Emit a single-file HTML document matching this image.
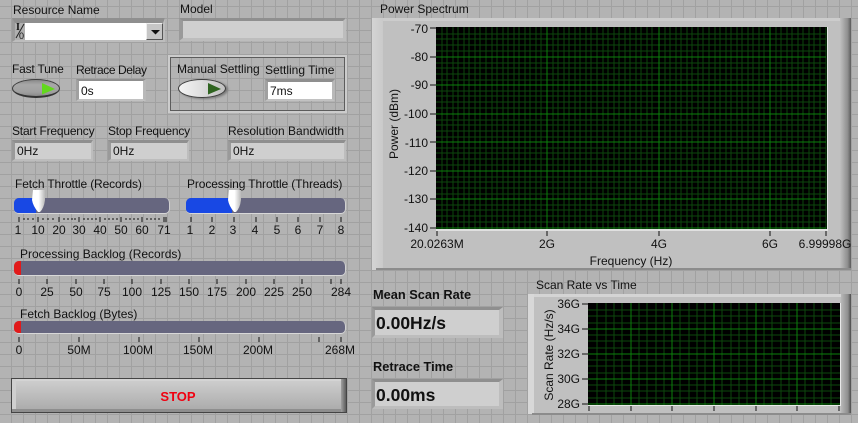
<!DOCTYPE html>
<html><head><meta charset="utf-8"><style>
html,body{margin:0;padding:0}
#p{position:relative;width:858px;height:423px;overflow:hidden;background-color:#b3b3b3;
background-image:linear-gradient(#a1a1a1 1px,transparent 1px),linear-gradient(90deg,#a1a1a1 1px,transparent 1px);
background-size:12px 12px;background-position:11px 6px;
font-family:"Liberation Sans",sans-serif;font-size:12px;color:#111}
.t{position:absolute;white-space:nowrap;line-height:14px}
.c{transform:translateX(-50%)}
.r{text-align:right}
.n{letter-spacing:-.2px}
.h{font-weight:bold;font-size:12.8px}
.v{font-weight:bold;font-size:17.5px}
.b{position:absolute;box-sizing:border-box;border-style:solid;border-width:3px;border-color:#8f8f8f #bdbdbd #bdbdbd #9a9a9a;background:#cfcfcf}
.w{background:#fff}
.track{position:absolute;background:#66667f;border-radius:5px;border-bottom:1px solid #d8d8d8;border-right:1px solid #d0d0d0;box-sizing:border-box;overflow:hidden}
.fill{position:absolute;left:0;top:0;bottom:0}
svg{position:absolute;left:0;top:0}
</style></head><body><div id="p">

<div class="t" style="left:13px;top:3px">Resource Name</div>
<div class="b" style="left:12px;top:18px;width:153px;height:24px;background:#b0b0b0;border-width:5px 2px 2px 3px"></div>
<div style="position:absolute;left:25px;top:23px;width:121px;height:17px;background:#fff"></div>
<div class="t" style="left:16px;top:23px;font-family:'Liberation Serif',serif;font-size:10px;line-height:9px;font-weight:bold">I</div>
<div class="t" style="left:19px;top:32px;font-size:9px;line-height:8px">0</div>
<svg width="858" height="423"><path d="M24 24L16 38" stroke="#222" fill="none"/></svg>
<div style="position:absolute;left:146px;top:23px;width:17px;height:17px;box-sizing:border-box;background:#c6c6c6;border:1px solid #555;border-top-color:#eee;border-left-color:#eee"></div>
<svg width="858" height="423"><path d="M151 30h9l-4.500 4.500z" fill="#111"/></svg>

<div class="t" style="left:180px;top:2px">Model</div>
<div class="b" style="left:179px;top:18px;width:167px;height:23px;border-width:3px 3px 3px 4px"></div>

<div class="t n" style="left:12px;top:62px">Fast Tune</div>
<div style="position:absolute;left:12px;top:79px;width:48px;height:19px;box-sizing:border-box;border-radius:50%;background:linear-gradient(#8a8a8a,#a8a8a8 30%,#a0a0a0 75%,#8a8a8a);border:1px solid #3c3c3c;border-bottom:2px solid #333"></div>
<svg width="858" height="423"><path d="M42 83L55 89L42 94.500z" fill="#62d81c"/></svg>
<div class="t" style="left:76px;top:63px;letter-spacing:-.42px">Retrace Delay</div>
<div class="b w" style="left:76px;top:79px;width:70px;height:22px;border-width:2px 3px 2px 3px;border-color:#8f8f8f #b8b8b8 #c2c2c2 #a0a0a0"></div>
<div class="t" style="left:81px;top:84px">0s</div>

<div style="position:absolute;left:168px;top:55px;width:179px;height:58px;box-sizing:border-box;border:2px solid #cccccc"><div style="position:absolute;inset:0;border:1px solid #5c5c5c"></div></div>
<div class="t" style="left:177px;top:62px">Manual Settling</div>
<div class="t" style="left:265px;top:63px">Settling Time</div>
<div style="position:absolute;left:178px;top:79px;width:48px;height:19px;box-sizing:border-box;border-radius:50%;background:linear-gradient(90deg,#f4f4f4,#e0e0e0 45%,#c0c0c0);border:1px solid #3c3c3c;box-shadow:2px 1px 2px #777"></div>
<svg width="858" height="423"><path d="M208 83L221 89L208 94.500z" fill="#2f6420"/></svg>
<div class="b w" style="left:265px;top:79px;width:70px;height:22px;border-width:3px 3px 2px 3px;border-color:#8f8f8f #b8b8b8 #c2c2c2 #a0a0a0"></div>
<div class="t" style="left:270px;top:84px">7ms</div>

<div class="t n" style="left:12px;top:124px">Start Frequency</div>
<div class="t n" style="left:108px;top:124px">Stop Frequency</div>
<div class="t" style="left:228px;top:124px">Resolution Bandwidth</div>
<div class="b" style="left:12px;top:140px;width:81px;height:21px;border-width:3px 2px 2px 3px"></div>
<div class="t" style="left:17px;top:144px">0Hz</div>
<div class="b" style="left:108px;top:140px;width:81px;height:21px;border-width:3px 2px 2px 3px"></div>
<div class="t" style="left:113px;top:144px">0Hz</div>
<div class="b" style="left:228px;top:140px;width:118px;height:21px;border-width:3px 2px 2px 3px"></div>
<div class="t" style="left:233px;top:144px">0Hz</div>

<div class="t" style="left:15px;top:177px;letter-spacing:-.13px">Fetch Throttle (Records)</div>
<div class="t" style="left:187px;top:177px;letter-spacing:-.11px">Processing Throttle (Threads)</div>
<div class="track" style="left:14px;top:198px;width:156px;height:16px"><div class="fill" style="width:22px;background:#1848e4"></div></div>
<div class="track" style="left:186px;top:198px;width:160px;height:16px"><div class="fill" style="width:46px;background:#1848e4"></div></div>
<svg width="858" height="423"><defs><linearGradient id="k"><stop offset="0" stop-color="#fff"/><stop offset=".5" stop-color="#fff"/><stop offset="1" stop-color="#b8b8b8"/></linearGradient></defs>
<path d="M33 190H45V200Q44 208 40 212H38Q33 206 32 200z" fill="url(#k)"/>
<path d="M229 190H241V200Q240 208 236 212H234Q229 206 228 200z" fill="url(#k)"/>
<path shape-rendering="crispEdges" stroke="#111" fill="none" d="M19 217v5M38 217v5M59 217v5M79 217v5M100 217v5M121 217v5M142 217v5M164 217v5M166 217v5M24 218v2M28 218v2M33 218v2M43 218v2M48 218v2M53 218v2M64 218v2M68 218v2M72 218v2M75 218v2M84 218v2M88 218v2M92 218v2M96 218v2M105 218v2M109 218v2M113 218v2M117 218v2M126 218v2M130 218v2M134 218v2M138 218v2M147 218v2M151 218v2M155 218v2M159 218v2
M191 217v5M212 217v5M234 217v5M256 217v5M277 217v5M298 217v5M320 217v5M341 217v5
M19 279v5M47 279v5M76 279v5M104 279v5M132 279v5M161 279v5M189 279v5M217 279v5M246 279v5M274 279v5M302 279v5M331 279v5M341 279v5
M19 337v5M79 337v5M139 337v5M199 337v5M259 337v5M319 337v5M341 337v5"/></svg>
<div class="t c" style="left:18px;top:223px">1</div><div class="t c" style="left:38px;top:223px">10</div><div class="t c" style="left:59px;top:223px">20</div><div class="t c" style="left:79px;top:223px">30</div><div class="t c" style="left:100px;top:223px">40</div><div class="t c" style="left:121px;top:223px">50</div><div class="t c" style="left:142px;top:223px">60</div><div class="t c" style="left:164px;top:223px">71</div>
<div class="t c" style="left:190px;top:223px">1</div><div class="t c" style="left:212px;top:223px">2</div><div class="t c" style="left:233px;top:223px">3</div><div class="t c" style="left:255px;top:223px">4</div><div class="t c" style="left:277px;top:223px">5</div><div class="t c" style="left:298px;top:223px">6</div><div class="t c" style="left:320px;top:223px">7</div><div class="t c" style="left:341px;top:223px">8</div>

<div class="t" style="left:20px;top:247px">Processing Backlog (Records)</div>
<div class="track" style="left:14px;top:261px;width:332px;height:15px"><div class="fill" style="width:7px;background:#e21a1a"></div></div>
<div class="t c" style="left:19px;top:285px">0</div><div class="t c" style="left:47px;top:285px">25</div><div class="t c" style="left:76px;top:285px">50</div><div class="t c" style="left:104px;top:285px">75</div><div class="t c" style="left:132px;top:285px">100</div><div class="t c" style="left:161px;top:285px">125</div><div class="t c" style="left:189px;top:285px">150</div><div class="t c" style="left:217px;top:285px">175</div><div class="t c" style="left:246px;top:285px">200</div><div class="t c" style="left:274px;top:285px">225</div><div class="t c" style="left:302px;top:285px">250</div><div class="t c" style="left:341px;top:285px">284</div>

<div class="t" style="left:20px;top:307px">Fetch Backlog (Bytes)</div>
<div class="track" style="left:14px;top:321px;width:332px;height:13px"><div class="fill" style="width:7px;background:#e21a1a"></div></div>
<div class="t c" style="left:19px;top:343px">0</div><div class="t c" style="left:79px;top:343px">50M</div><div class="t c" style="left:138px;top:343px">100M</div><div class="t c" style="left:198px;top:343px">150M</div><div class="t c" style="left:258px;top:343px">200M</div><div class="t c" style="left:340px;top:343px">268M</div>

<div style="position:absolute;left:11px;top:378px;width:336px;height:35px;box-sizing:border-box;border:1px solid #444;background:#d4d4d4">
<div style="position:absolute;left:0;top:2px;right:0;bottom:0;background:linear-gradient(#cdcdcd,#a9a9a9)"></div>
<div style="position:absolute;left:0;top:0;bottom:0;width:4px;background:#cfcfcf"></div>
<div style="position:absolute;right:0;top:0;bottom:0;width:5px;background:linear-gradient(90deg,#a0a0a0,#5c5c5c)"></div>
<div style="position:absolute;left:0;right:5px;bottom:0;height:3px;background:#8e8e8e"></div>
</div>
<div class="t c" style="left:178px;top:390px;color:#f00010;font-weight:bold;font-size:13px">STOP</div>

<div class="t" style="left:380px;top:2px">Power Spectrum</div>
<div style="position:absolute;left:372px;top:18px;width:479px;height:252px;background:#c0c0c0"></div>
<div style="position:absolute;left:372px;top:18px;width:479px;height:3px;background:#cccccc"></div>
<div style="position:absolute;left:372px;top:18px;width:11px;height:252px;background:linear-gradient(90deg,#d4d4d4,#cacaca)"></div>
<div style="position:absolute;left:840px;top:18px;width:11px;height:252px;background:linear-gradient(90deg,#c0c0c0,#8e8e8e 70%,#5a5a5a)"></div>
<div style="position:absolute;left:376px;top:268px;width:475px;height:2px;background:#8c8c8c"></div>
<div style="position:absolute;left:436px;top:27px;width:392px;height:204px;box-sizing:border-box;background:#000;border-right:1px solid #e8e8e8;border-bottom:2px solid #e0e0e0"></div>
<svg width="858" height="423" shape-rendering="crispEdges" fill="none">
<path stroke="#0d470d" d="M442 27v202M447 27v202M453 27v202M458 27v202M464 27v202M469 27v202M475 27v202M480 27v202M486 27v202M492 27v202M497 27v202M503 27v202M508 27v202M514 27v202M519 27v202M525 27v202M530 27v202M536 27v202M541 27v202M553 27v202M558 27v202M564 27v202M569 27v202M575 27v202M580 27v202M586 27v202M591 27v202M597 27v202M603 27v202M608 27v202M614 27v202M619 27v202M625 27v202M630 27v202M636 27v202M641 27v202M647 27v202M652 27v202M665 27v202M670 27v202M676 27v202M681 27v202M687 27v202M692 27v202M698 27v202M703 27v202M709 27v202M715 27v202M720 27v202M726 27v202M731 27v202M737 27v202M742 27v202M748 27v202M753 27v202M759 27v202M764 27v202M776 27v202M781 27v202M787 27v202M792 27v202M798 27v202M803 27v202M809 27v202M814 27v202M820 27v202M826 27v202
M436 34h390M436 39h390M436 45h390M436 51h390M436 63h390M436 68h390M436 74h390M436 80h390M436 91h390M436 96h390M436 102h390M436 108h390M436 120h390M436 125h390M436 131h390M436 137h390M436 148h390M436 153h390M436 159h390M436 165h390M436 177h390M436 182h390M436 188h390M436 194h390M436 205h390M436 210h390M436 216h390M436 222h390"/>
<path stroke="#0c800c" d="M547 27v202M659 27v202M770 27v202M436 57h390M436 85h390M436 114h390M436 142h390M436 171h390M436 199h390M436 228h390"/>
<path stroke="#111" d="M430 28h6M430 57h6M430 85h6M430 114h6M430 142h6M430 171h6M430 199h6M430 228h6M437 231v5M547 231v5M659 231v5M770 231v5M826 231v5"/>
</svg>
<div class="t r" style="right:430px;top:22px">-70</div><div class="t r" style="right:430px;top:50px">-80</div><div class="t r" style="right:430px;top:78px">-90</div><div class="t r" style="right:430px;top:107px">-100</div><div class="t r" style="right:430px;top:136px">-110</div><div class="t r" style="right:430px;top:164px">-120</div><div class="t r" style="right:430px;top:192px">-130</div><div class="t r" style="right:430px;top:221px">-140</div>
<div class="t c" style="left:437px;top:237px">20.0263M</div><div class="t c" style="left:547px;top:237px">2G</div><div class="t c" style="left:659px;top:237px">4G</div><div class="t c" style="left:770px;top:237px">6G</div><div class="t c" style="left:825px;top:237px">6.99998G</div>
<div class="t c" style="left:631px;top:254px">Frequency (Hz)</div>
<div class="t" style="left:394px;top:124px;transform:translate(-50%,-50%) rotate(-90deg)">Power (dBm)</div>

<div class="t h" style="left:373px;top:288px">Mean Scan Rate</div>
<div class="b" style="left:372px;top:307px;width:131px;height:31px;border-width:3px 4px 3px 3px"></div>
<div class="t v" style="left:376px;top:316px">0.00Hz/s</div>
<div class="t h" style="left:373px;top:360px">Retrace Time</div>
<div class="b" style="left:372px;top:379px;width:131px;height:30px;border-width:3px 4px 3px 3px"></div>
<div class="t v" style="left:376px;top:388px">0.00ms</div>

<div class="t" style="left:536px;top:278px">Scan Rate vs Time</div>
<div style="position:absolute;left:528px;top:294px;width:323px;height:120px;background:#c0c0c0"></div>
<div style="position:absolute;left:528px;top:294px;width:323px;height:3px;background:#d4d4d4"></div>
<div style="position:absolute;left:528px;top:294px;width:6px;height:120px;background:#d8d8d8"></div>
<div style="position:absolute;left:841px;top:294px;width:10px;height:120px;background:linear-gradient(90deg,#b8b8b8,#8e8e8e 70%,#4a4a4a)"></div>
<div style="position:absolute;left:532px;top:413px;width:319px;height:2px;background:#8c8c8c"></div>
<div style="position:absolute;left:588px;top:303px;width:253px;height:103px;box-sizing:border-box;background:#000;border-right:1px solid #e8e8e8;border-bottom:1px solid #e8e8e8"></div>
<svg width="858" height="423" shape-rendering="crispEdges" fill="none">
<path stroke="#0d470d" d="M597 303v102M606 303v102M614 303v102M622 303v102M639 303v102M647 303v102M656 303v102M664 303v102M680 303v102M689 303v102M697 303v102M705 303v102M722 303v102M731 303v102M739 303v102M747 303v102M764 303v102M772 303v102M781 303v102M789 303v102M805 303v102M814 303v102M822 303v102M831 303v102
M588 310h252M588 316h252M588 323h252M588 335h252M588 341h252M588 348h252M588 360h252M588 366h252M588 373h252M588 385h252M588 391h252M588 398h252"/>
<path stroke="#0c800c" d="M631 303v102M672 303v102M714 303v102M756 303v102M797 303v102M588 329h252M588 354h252M588 379h252M588 404h252"/>
<path stroke="#111" d="M582 304h6M582 329h6M582 354h6M582 379h6M582 404h6M589 406v5M631 406v5M672 406v5M714 406v5M756 406v5M797 406v5M839 406v5"/>
</svg>
<div class="t r" style="right:278px;top:297px">36G</div><div class="t r" style="right:278px;top:322px">34G</div><div class="t r" style="right:278px;top:347px">32G</div><div class="t r" style="right:278px;top:372px">30G</div><div class="t r" style="right:278px;top:397px">28G</div>
<div class="t" style="left:549px;top:355px;transform:translate(-50%,-50%) rotate(-90deg)">Scan Rate (Hz/s)</div>

</div></body></html>
